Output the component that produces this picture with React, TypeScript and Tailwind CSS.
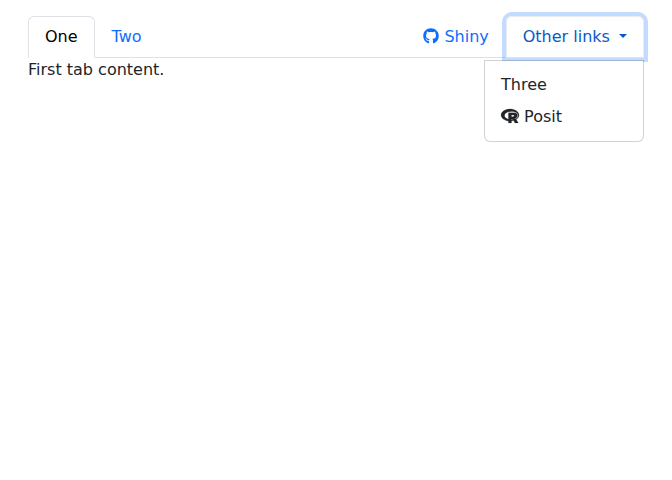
import { FaGithub, FaRProject } from "react-icons/fa";

const tab = "-mb-px block rounded-t-md border px-4 py-2 whitespace-nowrap";

export default function App() {
  return (
    <div className="min-h-screen bg-white px-7 pt-4 font-['DejaVu_Sans',sans-serif] text-base text-[#212529]">
      <nav>
        <ul className="flex border-b border-[#dee2e6]">
          <li>
            <button
              type="button"
              aria-current="page"
              className={`${tab} border-[#dee2e6] border-b-white bg-white text-black`}
            >
              One
            </button>
          </li>
          <li>
            <button type="button" className={`${tab} border-transparent text-[#0d6efd]`}>
              Two
            </button>
          </li>
          <li className="ml-auto">
            <a href="#shiny" className={`${tab} border-transparent text-[#0d6efd]`}>
              <FaGithub className="inline-block size-4 align-[-2px]" aria-hidden="true" /> Shiny
            </a>
          </li>
          <li className="relative">
            <button
              type="button"
              aria-haspopup="true"
              aria-expanded="true"
              className={`${tab} border-[#e9ecef] border-b-[#dee2e6] text-[#0a58ca] ring-4 ring-[#0d6efd]/25`}
            >
              Other links{" "}
              <span className="ml-1 inline-block border-x-4 border-t-4 border-x-transparent border-t-current align-[4px]" />
            </button>
            <ul className="absolute top-full right-0 z-10 mt-[3px] w-40 rounded-b-md border border-black/[0.175] bg-white bg-clip-padding py-2">
              <li>
                <a href="#three" className="block px-4 py-1">
                  Three
                </a>
              </li>
              <li>
                <a href="#posit" className="block px-4 py-1">
                  <FaRProject
                    className="inline-block h-4 w-[18px] overflow-visible align-[-2px]"
                    strokeWidth={6}
                    aria-hidden="true"
                  />{" "}
                  Posit
                </a>
              </li>
            </ul>
          </li>
        </ul>
      </nav>
      <main>First tab content.</main>
    </div>
  );
}
